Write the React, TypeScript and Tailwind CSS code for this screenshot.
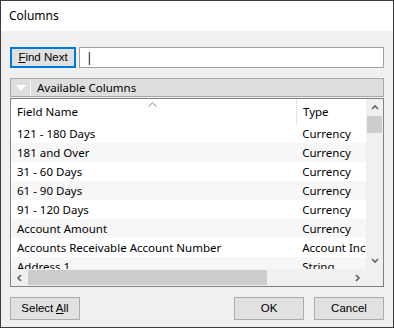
import React from "react";

const rows: [string, string][] = [
  ["121 - 180 Days", "Currency"],
  ["181 and Over", "Currency"],
  ["31 - 60 Days", "Currency"],
  ["61 - 90 Days", "Currency"],
  ["91 - 120 Days", "Currency"],
  ["Account Amount", "Currency"],
  ["Accounts Receivable Account Number", "Account Inc"],
  ["Address 1", "String"],
];

function Chevron({ dir }: { dir: "up" | "down" | "left" | "right" }) {
  const d = {
    up: "M1 5 L4 2 L7 5",
    down: "M1 2 L4 5 L7 2",
    left: "M5 1 L2 4 L5 7",
    right: "M2 1 L5 4 L2 7",
  }[dir];
  return (
    <svg width="8" height="8" viewBox="0 0 8 8">
      <path d={d} fill="none" stroke="#606060" strokeWidth="1.6" />
    </svg>
  );
}

const btnFont = { fontFamily: '"Liberation Sans", Arial, sans-serif' };

function Btn({ children, className = "" }: { children: React.ReactNode; className?: string }) {
  return (
    <div
      style={btnFont}
      className={
        "flex h-[23px] items-center justify-center border border-[#adadad] bg-[#e1e1e1] text-[11.5px] text-black " +
        className
      }
    >
      {children}
    </div>
  );
}

export default function App() {
  return (
    <div
      className="flex h-[328px] w-[394px] flex-col border border-[#3c3c3c] bg-[#f0f0f0] text-black"
      style={{ fontFamily: '"Noto Sans", "Open Sans", sans-serif' }}
    >
      {/* title bar */}
      <div className="flex h-[30px] shrink-0 items-center bg-white pl-[8px] text-[12px]">Columns</div>

      <div className="flex flex-1 flex-col px-[9px] pt-[16px]">
        {/* search row */}
        <div className="flex h-[21px] gap-[3px]">
          <div
            style={btnFont}
            className="flex w-[66px] items-center justify-center border-2 border-[#0078d7] bg-[#e1e1e1] text-[11.5px]"
          >
            <span>
              <u>F</u>ind Next
            </span>
          </div>
          <div className="flex flex-1 items-center border border-[#a0a0a0] bg-white pl-[6px] text-[12px]">
            |
          </div>
        </div>

        {/* group header */}
        <div className="mt-[10px] flex h-[19px] items-center border border-[#a8a8a8] bg-[#dedede] text-[11.5px]">
          <div className="flex w-[19px] justify-center">
            <svg width="10" height="6" viewBox="0 0 10 6">
              <path d="M0 0 L10 0 L5 6 Z" fill="#ffffff" />
            </svg>
          </div>
          <div className="h-[15px] w-px bg-[#f8f8f8]" />
          <span className="pl-[6px]">Available Columns</span>
        </div>

        {/* grid */}
        <div className="mt-px flex h-[189px] flex-col border border-[#828282] bg-white text-[11.5px]">
          <div className="flex h-[170px]">
            <div className="flex-1 overflow-hidden">
              <div className="relative flex h-[25px] items-center">
                <div className="w-[285px] pl-[6px]">Field Name</div>
                <div className="h-full w-px bg-[#e5e5e5]" />
                <div className="pl-[6px]">Type</div>
                <svg className="absolute left-[137px] top-[3px]" width="9" height="5" viewBox="0 0 9 5">
                  <path d="M0.5 4.5 L4.5 0.8 L8.5 4.5" fill="none" stroke="#8a8a8a" strokeWidth="1" />
                </svg>
              </div>
              {rows.map(([name, type], i) => (
                <div
                  key={name}
                  className={"flex h-[19px] items-center whitespace-nowrap " + (i % 2 === 1 ? "bg-[#f7f7f7]" : "bg-white")}
                >
                  <div className="w-[286px] overflow-hidden pl-[6px]">{name}</div>
                  <div className="w-[70px] overflow-hidden pl-[6px]">{type}</div>
                </div>
              ))}
            </div>
            {/* vertical scrollbar */}
            <div className="flex w-[17px] flex-col bg-[#f0f0f0]">
              <div className="flex h-[17px] items-center justify-center">
                <Chevron dir="up" />
              </div>
              <div className="mx-[1px] h-[17px] bg-[#cdcdcd]" />
              <div className="flex-1" />
              <div className="flex h-[17px] items-center justify-center">
                <Chevron dir="down" />
              </div>
            </div>
          </div>
          {/* horizontal scrollbar */}
          <div className="flex h-[17px] bg-[#f0f0f0]">
            <div className="flex w-[17px] items-center justify-center">
              <Chevron dir="left" />
            </div>
            <div className="my-[1px] w-[239px] bg-[#cdcdcd]" />
            <div className="flex-1" />
            <div className="flex w-[17px] items-center justify-center">
              <Chevron dir="right" />
            </div>
            <div className="w-[17px] bg-[#f0f0f0]" />
          </div>
        </div>

        {/* footer */}
        <div className="mt-[10px] flex">
          <Btn className="w-[70px]">
            <span>
              Select <u>A</u>ll
            </span>
          </Btn>
          <div className="flex-1" />
          <Btn className="w-[70px]">OK</Btn>
          <Btn className="ml-[10px] w-[70px]">Cancel</Btn>
        </div>
      </div>
    </div>
  );
}
